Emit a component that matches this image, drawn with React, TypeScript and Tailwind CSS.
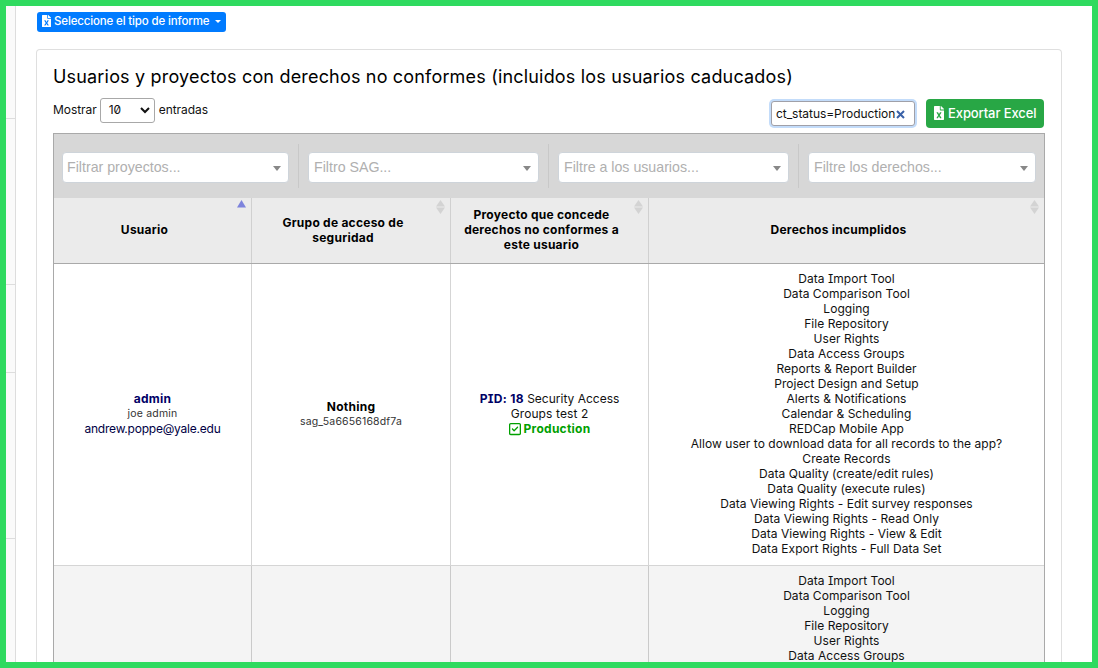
import React from "react";
import { FaFileExcel } from "react-icons/fa";
import { FaRegSquareCheck } from "react-icons/fa6";

const rights = [
  "Data Import Tool",
  "Data Comparison Tool",
  "Logging",
  "File Repository",
  "User Rights",
  "Data Access Groups",
  "Reports & Report Builder",
  "Project Design and Setup",
  "Alerts & Notifications",
  "Calendar & Scheduling",
  "REDCap Mobile App",
  "Allow user to download data for all records to the app?",
  "Create Records",
  "Data Quality (create/edit rules)",
  "Data Quality (execute rules)",
  "Data Viewing Rights - Edit survey responses",
  "Data Viewing Rights - Read Only",
  "Data Viewing Rights - View & Edit",
  "Data Export Rights - Full Data Set",
];

function RightsList({ items, className }: { items: string[]; className: string }) {
  return (
    <div
      className={`flex flex-col items-center pt-[7px] text-[12px] leading-[15px] tracking-[0.04px] whitespace-nowrap ${className}`}
    >
      {items.map((label) => (
        <span key={label}>{label}</span>
      ))}
    </div>
  );
}

function Filter({ label, className }: { label: string; className: string }) {
  return (
    <div
      className={`flex h-[31px] items-center justify-between rounded-[4px] border border-[#ced4da] bg-white pr-[7px] font-['Liberation_Sans',sans-serif] text-[14.2px] text-[#b0b0b0] ${className}`}
    >
      <span>{label}</span>
      <svg width="8" height="5" viewBox="0 0 8 5" className="mt-[2px]">
        <path d="M0 0h8L4 5z" fill="#888" />
      </svg>
    </div>
  );
}

function Sep() {
  return <div className="mb-[4px] ml-[9px] h-[44px] w-px bg-[#c8c8c8]" />;
}

function Head({ children, sort }: { children: React.ReactNode; sort: "asc" | "none" | "last" }) {
  return (
    <div
      className={`relative flex h-[65px] items-center justify-center pr-[26px] pb-[2px] pl-[10px] text-center text-[12px] leading-[15px] font-bold tracking-[0.25px] ${
        sort === "last" ? "" : "border-r border-[#d0d0d0]"
      }`}
    >
      <span className="whitespace-nowrap">{children}</span>
      <svg width="9" height="14" viewBox="0 0 9 14" className="absolute top-[2px] right-[5px]">
        {sort === "asc" ? (
          <path d="M0 7.5L4.5 0 9 7.5z" fill="#7d83dc" />
        ) : (
          <path d="M0 6.6L4.5 0 9 6.6zM0 7.6h9L4.5 14z" fill="#d3d3d3" />
        )}
      </svg>
    </div>
  );
}

const cols = "grid grid-cols-[198px_199px_198px_395px]";

export default function App() {
  return (
    <div className="flex h-[668px] w-[1098px] overflow-hidden border-[6px] border-[#2fda5f] bg-white font-['Inter',sans-serif] text-[#111] [font-feature-settings:'cv08','zero']">
      <div className="flex h-full w-[10px] shrink-0 flex-col border-r border-[#ddd] bg-[#fafafa]">
        <div className="h-[113px] shrink-0 border-b border-[#ddd]" />
        <div className="h-[166px] shrink-0 border-b border-[#ddd]" />
        <div className="h-[88px] shrink-0 border-b border-[#ddd]" />
        <div className="h-[166px] shrink-0 border-b border-[#ddd]" />
      </div>
      <div className="flex flex-col pt-[6px] pl-[20px]">
        <button className="ml-px flex h-[20px] w-[189px] shrink-0 items-center rounded-[3px] bg-[#007bff] pl-[5px] text-[11.5px] font-medium whitespace-nowrap text-white">
          <FaFileExcel className="mr-[3px] mb-[2px] h-[12px] w-[9px] shrink-0" />
          <span className="tracking-[-0.15px]">Seleccione el tipo de informe</span>
          <svg width="6" height="3" viewBox="0 0 6 3" className="mb-[2px] ml-[6px] shrink-0">
            <path d="M0 0h6L3 3z" fill="#fff" />
          </svg>
        </button>
        <section className="mt-[17px] flex h-[613px] w-[1026px] shrink-0 flex-col rounded-t-[4px] border border-b-0 border-[#dfdfdf] px-4">
          <h1 className="mt-[15px] h-[24px] shrink-0 text-[18px] leading-[24px] tracking-[0.18px] whitespace-nowrap text-black">
            Usuarios y proyectos con derechos no conformes (incluidos los usuarios caducados)
          </h1>
          <div className="flex h-[44px] shrink-0 items-start justify-between">
            <div className="mt-[9px] flex h-[25px] items-center text-[12px] tracking-[-0.05px]">
              <span className="pb-px">Mostrar</span>
              <div className="mr-[4px] ml-[3px] flex h-[25px] w-[55px] items-center justify-between rounded-[3px] border border-[#a8a8a8] bg-white pr-[4px] pl-[8px]">
                <span className="pb-px">10</span>
                <svg width="10" height="7" viewBox="0 0 10 7">
                  <path d="M1 1l4 4 4-4" fill="none" stroke="#111" strokeWidth="2" />
                </svg>
              </div>
              <span className="pb-px">entradas</span>
            </div>
            <div className="mt-[10px] mr-px flex items-center">
              <div className="flex h-[25px] w-[144px] items-center rounded-[3px] border border-[#a0a0a8] bg-white pl-[4px] text-[12px] whitespace-nowrap ring-2 ring-[#c3dcfa]">
                <span className="tracking-[-0.05px]">ct_status=Production</span>
                <svg width="9" height="9" viewBox="0 0 9 9" className="mt-[2px] ml-px shrink-0">
                  <path d="M1 1l7 7M8 1L1 8" stroke="#3a62a8" strokeWidth="2" />
                </svg>
              </div>
              <button className="ml-[11px] flex h-[29px] w-[118px] items-center rounded-[4px] bg-[#28a745] pl-[8px] text-[13px] font-medium whitespace-nowrap text-white">
                <FaFileExcel className="mr-[4px] mb-[2px] h-[14px] w-[10px] shrink-0" preserveAspectRatio="none" />
                <span className="tracking-[-0.1px]">Exportar Excel</span>
              </button>
            </div>
          </div>
          <div className="flex min-h-0 w-[992px] grow flex-col overflow-hidden border border-b-0 border-[#a9a9a9]">
            <div className="flex h-[64px] shrink-0 items-center bg-[#d7d7d7] pt-[3px]">
              <Filter label="Filtrar proyectos..." className="ml-[8px] w-[227px] pl-[4px]" />
              <Sep />
              <Filter label="Filtro SAG..." className="ml-[9px] w-[231px] pl-[5px]" />
              <Sep />
              <Filter label="Filtre a los usuarios..." className="ml-[9px] w-[231px] pl-[5px]" />
              <Sep />
              <Filter label="Filtre los derechos..." className="ml-[9px] w-[228px] pl-[5px]" />
            </div>
            <div className={`${cols} shrink-0 border-b border-[#a9a9a9] bg-[#ebebeb] text-black`}>
              <Head sort="asc">Usuario</Head>
              <Head sort="none">
                Grupo de acceso de
                <br />
                seguridad
              </Head>
              <Head sort="none">
                Proyecto que concede
                <br />
                derechos no conformes a
                <br />
                este usuario
              </Head>
              <Head sort="last">Derechos incumplidos</Head>
            </div>
            <div className={`${cols} shrink-0 border-b border-[#d5d5d5] bg-white text-[12px] leading-[15px]`}>
              <div className="flex flex-col items-center justify-center border-r border-[#d5d5d5] pb-[2px]">
                <span className="font-bold tracking-[0.3px] text-[#000066]">admin</span>
                <span className="text-[10.5px] tracking-[0.2px] text-[#333]">joe admin</span>
                <span className="tracking-[-0.22px] text-[#000044]">andrew.poppe@yale.edu</span>
              </div>
              <div className="flex flex-col items-center justify-center border-r border-[#d5d5d5] pb-px">
                <span className="font-bold tracking-[0.25px] text-black">Nothing</span>
                <span className="text-[10.5px] tracking-[0.16px] text-[#333]">sag_5a6656168df7a</span>
              </div>
              <div className="flex flex-col items-center justify-center border-r border-[#d5d5d5] pb-[2px]">
                <span>
                  <b className="tracking-[0.3px] text-[#000066]">PID: 18</b> Security Access
                </span>
                <span className="tracking-[0.1px]">Groups test 2</span>
                <span className="flex items-center font-bold tracking-[0.25px] text-[#00a000]">
                  <FaRegSquareCheck className="mr-[3px] h-[14px] w-[12px]" preserveAspectRatio="none" />
                  <span>Production</span>
                </span>
              </div>
              <RightsList items={rights} className="pb-[9px]" />
            </div>
            <div className={`${cols} min-h-0 grow bg-[#f4f4f4]`}>
              <div className="border-r border-[#cacaca]" />
              <div className="border-r border-[#cacaca]" />
              <div className="border-r border-[#cacaca]" />
              <RightsList items={rights.slice(0, 6)} className="" />
            </div>
          </div>
        </section>
      </div>
    </div>
  );
}
